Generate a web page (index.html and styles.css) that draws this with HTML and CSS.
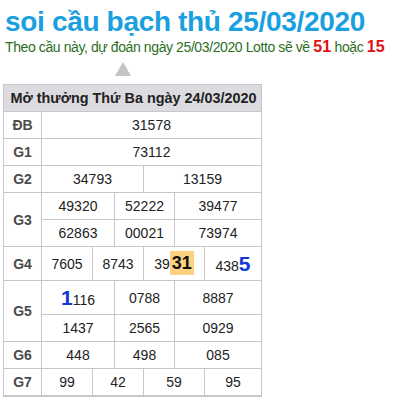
FILE: index.html
```html
<!DOCTYPE html>
<html lang="vi">
<head>
<meta charset="utf-8">
<title>soi cầu bạch thủ 25/03/2020</title>
<link rel="stylesheet" href="styles.css">
</head>
<body>
<div class="page">
  <h1 class="title">soi cầu bạch thủ 25/03/2020</h1>
  <p class="subtitle">Theo cầu này, dự đoán ngày 25/03/2020 Lotto sẽ về <b class="hit">51</b> hoặc <b class="hit">15</b></p>
  <div class="pointer"><span class="tri"></span></div>
  <table class="kq">
    <colgroup>
      <col class="c0"><col class="c1"><col class="c2"><col class="c3"><col class="c4"><col class="c5"><col class="c6">
    </colgroup>
    <tr><th class="head" colspan="7">Mở thưởng Thứ Ba ngày 24/03/2020</th></tr>
    <tr><td class="lbl">ĐB</td><td colspan="6">31578</td></tr>
    <tr><td class="lbl">G1</td><td colspan="6">73112</td></tr>
    <tr><td class="lbl">G2</td><td colspan="3">34793</td><td colspan="3">13159</td></tr>
    <tr><td class="lbl" rowspan="2">G3</td><td colspan="2">49320</td><td colspan="2">52222</td><td colspan="2">39477</td></tr>
    <tr><td colspan="2">62863</td><td colspan="2">00021</td><td colspan="2">73974</td></tr>
    <tr class="tall"><td class="lbl">G4</td><td>7605</td><td colspan="2">8743</td><td colspan="2">39<b class="mark">31</b></td><td>438<b class="big">5</b></td></tr>
    <tr class="tall"><td class="lbl" rowspan="2">G5</td><td colspan="2"><b class="big">1</b>116</td><td colspan="2">0788</td><td colspan="2">8887</td></tr>
    <tr><td colspan="2">1437</td><td colspan="2">2565</td><td colspan="2">0929</td></tr>
    <tr><td class="lbl">G6</td><td colspan="2">448</td><td colspan="2">498</td><td colspan="2">085</td></tr>
    <tr><td class="lbl">G7</td><td>99</td><td colspan="2">42</td><td colspan="2">59</td><td>95</td></tr>
  </table>
</div>
</body>
</html>
```
FILE: styles.css
```css
html, body {
  margin: 0;
  padding: 0;
  background: #fff;
}
body {
  font-family: Arial, "Liberation Sans", sans-serif;
  color: #222;
}
.page {
  padding: 0 3px;
}
.title {
  margin: 0;
  padding: 7px 0 0 2px;
  font-size: 28px;
  line-height: 30px;
  letter-spacing: -0.33px;
  font-weight: bold;
  color: #1a9fe0;
  white-space: nowrap;
}
.subtitle {
  margin: 0;
  padding-left: 2px;
  font-size: 14px;
  line-height: 20px;
  letter-spacing: -0.4px;
  color: #2c6e1e;
  white-space: nowrap;
}
.hit {
  color: #e01010;
  font-size: 16px;
  letter-spacing: 0;
}
.pointer {
  height: 27px;
  padding-top: 5px;
  box-sizing: border-box;
  padding-left: 112px;
}
.tri {
  display: block;
  width: 0;
  height: 0;
  border-left: 8px solid transparent;
  border-right: 8px solid transparent;
  border-bottom: 14px solid #c4c4c4;
}
.kq {
  border-collapse: collapse;
  table-layout: fixed;
  width: 258px;
  font-size: 14px;
  border: 1px solid #c6c6cc;
  border-bottom-width: 2px;
}
.c0 { width: 38px; }
.c1 { width: 51px; }
.c2 { width: 22px; }
.c3 { width: 29px; }
.c4 { width: 31px; }
.c5 { width: 30px; }
.c6 { width: 57px; }
.kq th, .kq td {
  border: 1px solid #c6c6cc;
  text-align: center;
  padding: 0;
  height: 26px;
  white-space: nowrap;
  overflow: visible;
}
.kq tr.tall td {
  height: 33px;
}
.kq .head {
  background: #dcdce0;
  font-size: 14.4px;
  font-weight: bold;
  color: #222;
  padding-left: 2px;
}
.kq .lbl {
  font-weight: bold;
  color: #4a4a4a;
  font-size: 14px;
}
.mark {
  background: #fcd17f;
  color: #111;
  font-size: 18px;
  padding: 2px 2px;
}
.big {
  color: #1438d6;
  font-size: 21px;
}
```
